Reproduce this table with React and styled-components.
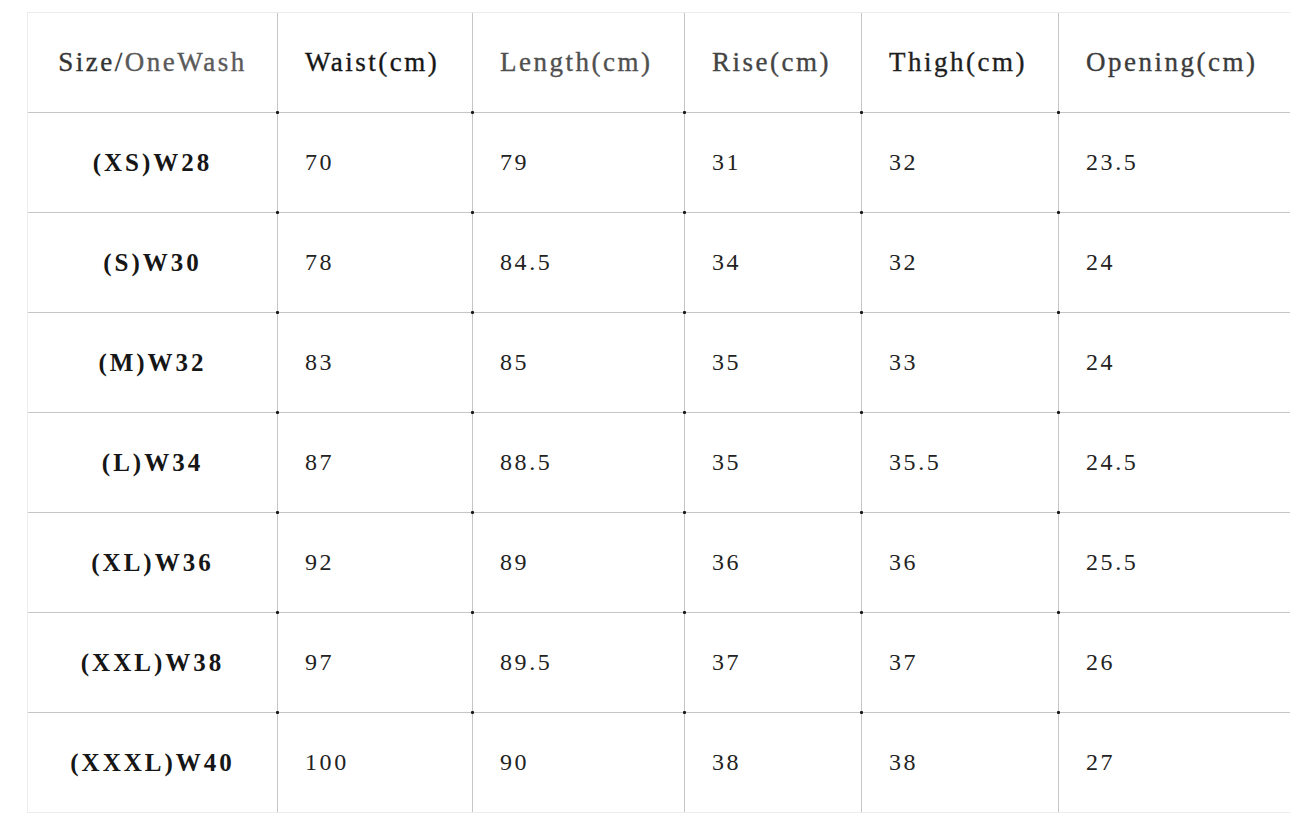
import React from "react";
import styled, { createGlobalStyle } from "styled-components";

const GlobalStyle = createGlobalStyle`
    html, body {
        margin: 0;
        padding: 0;
        background: #fff;
    }
`;

const columns = [
    { key: "size", label: "Size/", sub: "OneWash", width: 250, tone: "#333" },
    { key: "waist", label: "Waist(cm)", width: 195, tone: "#161616" },
    { key: "length", label: "Length(cm)", width: 212, tone: "#505050" },
    { key: "rise", label: "Rise(cm)", width: 177, tone: "#444" },
    { key: "thigh", label: "Thigh(cm)", width: 197, tone: "#1e1e1e" },
    { key: "opening", label: "Opening(cm)", width: 232, tone: "#3c3c3c" },
];

const rows = [
    ["(XS)W28", "70", "79", "31", "32", "23.5"],
    ["(S)W30", "78", "84.5", "34", "32", "24"],
    ["(M)W32", "83", "85", "35", "33", "24"],
    ["(L)W34", "87", "88.5", "35", "35.5", "24.5"],
    ["(XL)W36", "92", "89", "36", "36", "25.5"],
    ["(XXL)W38", "97", "89.5", "37", "37", "26"],
    ["(XXXL)W40", "100", "90", "38", "38", "27"],
];

const Page = styled.div`
    padding: 12px 0 0 27px;
`;

const SizeTable = styled.table`
    table-layout: fixed;
    width: 1264px;
    border-collapse: separate;
    border-spacing: 0;
    border: 1px solid #ececec;
    border-right: none;
    font-family: "Liberation Serif", "Times New Roman", serif;
    color: #1e1e1e;
`;

const HeadCell = styled.th`
    height: 99px;
    padding: 0 0 0 ${(p) => (p.$first ? 0 : 27)}px;
    text-align: ${(p) => (p.$first ? "center" : "left")};
    font-size: 27px;
    font-weight: 400;
    letter-spacing: 2.5px;
    color: ${(p) => p.$tone};
    -webkit-text-stroke: 0.35px ${(p) => p.$tone};
    border-bottom: 1px solid #c6c6c6;
    border-right: ${(p) => (p.$last ? "none" : "1px solid #c6c6c6")};
    vertical-align: middle;
`;

const Faded = styled.span`
    color: #5a5a5a;
    -webkit-text-stroke: 0.35px #5a5a5a;
`;

const Cell = styled.td`
    position: relative;
    height: 99px;
    padding: 0 0 0 ${(p) => (p.$first ? 0 : 27)}px;
    text-align: ${(p) => (p.$first ? "center" : "left")};
    font-size: ${(p) => (p.$first ? 25 : 24)}px;
    font-weight: ${(p) => (p.$first ? 700 : 400)};
    letter-spacing: ${(p) => (p.$first ? 3 : 2.6)}px;
    color: ${(p) => (p.$first ? "#161616" : "#222")};
    border-bottom: ${(p) => (p.$lastRow ? "none" : "1px solid #c6c6c6")};
    border-right: ${(p) => (p.$last ? "none" : "1px solid #c6c6c6")};
    vertical-align: middle;

    &::before {
        content: "";
        display: ${(p) => (p.$first ? "none" : "block")};
        position: absolute;
        left: -2px;
        top: -2px;
        width: 3px;
        height: 3px;
        background: #1a1a1a;
        border-radius: 1px;
    }
`;

const App = () => {
    return (
        <Page>
            <GlobalStyle />
            <SizeTable>
                <colgroup>
                    {columns.map((c) => (
                        <col key={c.key} style={{ width: c.width }} />
                    ))}
                </colgroup>
                <thead>
                    <tr>
                        {columns.map((c, i) => (
                            <HeadCell
                                key={c.key}
                                $first={i === 0}
                                $last={i === columns.length - 1}
                                $tone={c.tone}
                            >
                                {c.label}
                                {c.sub && <Faded>{c.sub}</Faded>}
                            </HeadCell>
                        ))}
                    </tr>
                </thead>
                <tbody>
                    {rows.map((row, r) => (
                        <tr key={row[0]}>
                            {row.map((value, i) => (
                                <Cell
                                    key={i}
                                    $first={i === 0}
                                    $last={i === row.length - 1}
                                    $lastRow={r === rows.length - 1}
                                >
                                    {value}
                                </Cell>
                            ))}
                        </tr>
                    ))}
                </tbody>
            </SizeTable>
        </Page>
    );
};

export default App;
